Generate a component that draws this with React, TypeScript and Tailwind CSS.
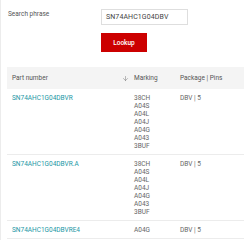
import { ArrowDown } from 'lucide-react';

type Row = { part: string; markings: string[]; pkg: string };

const rows: Row[] = [
  { part: 'SN74AHC1G04DBVR', markings: ['38CH', 'A04S', 'A04L', 'A04J', 'A04G', 'A043', '3BUF'], pkg: 'DBV | 5' },
  { part: 'SN74AHC1G04DBVR.A', markings: ['38CH', 'A04S', 'A04L', 'A04J', 'A04G', 'A043', '3BUF'], pkg: 'DBV | 5' },
  { part: 'SN74AHC1G04DBVRE4', markings: ['A04G'], pkg: 'DBV | 5' },
];

export default function App() {
  return (
    <div className="w-[244px] h-[240px] overflow-hidden bg-white border-l border-[#ececec] font-['Roboto','Liberation_Sans',sans-serif] text-[6.5px] leading-[8px] text-[#666]">
      <div className="flex">
        <div className="w-[100px] pl-[7px] pt-[10px] text-[#555]">Search phrase</div>
        <div className="flex flex-col pt-[9px]">
          <div className="w-[87px] h-[16px] border border-[#dedede] flex items-center pl-[4px] text-[7px] text-[#444] tracking-[0.1px]">
            SN74AHC1G04DBV
          </div>
          <button className="mt-[8px] w-[46px] h-[19px] bg-[#cc0000] text-white text-[6.5px] font-medium">
            Lookup
          </button>
        </div>
      </div>

      <div className="ml-[6px] mt-[15px]">
        <div className="grid grid-cols-[127px_46px_1fr] h-[22px] items-center bg-[#f4f4f4] text-[#555]">
          <div className="flex items-center justify-between pl-[5px] pr-[5px]">
            <span>Part number</span>
            <ArrowDown size={7} strokeWidth={1.5} className="text-[#666]" />
          </div>
          <div>Marking</div>
          <div>Package | Pins</div>
        </div>
        {rows.map((r) => (
          <div key={r.part} className="grid grid-cols-[127px_46px_1fr] pt-[5px] pb-[4px] border-b border-[#ececec]">
            <div className="pl-[5px] text-[#1b97a5]">{r.part}</div>
            <div className="flex flex-col">
              {r.markings.map((m, i) => (
                <span key={i}>{m}</span>
              ))}
            </div>
            <div>{r.pkg}</div>
          </div>
        ))}
      </div>
    </div>
  );
}
